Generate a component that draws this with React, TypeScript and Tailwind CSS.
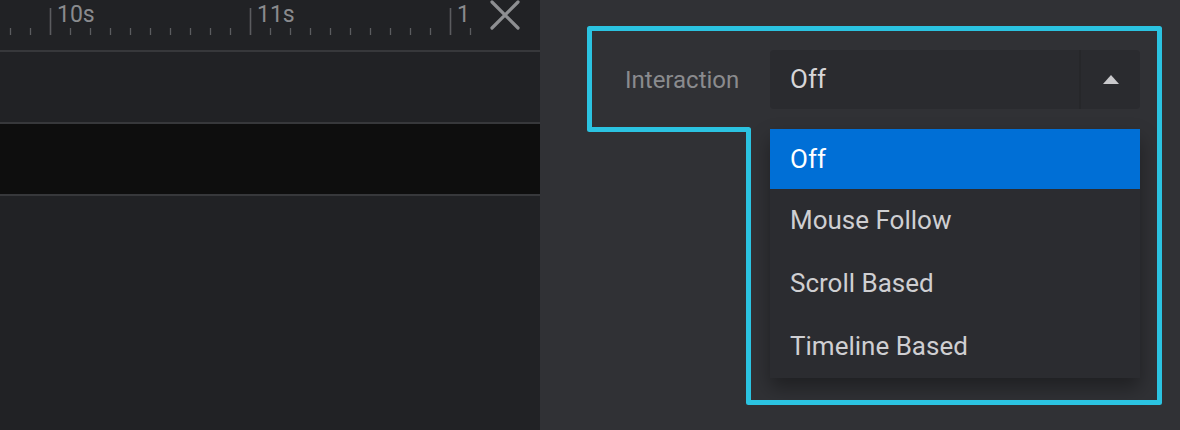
import React from "react";

const font = { fontFamily: "Roboto, 'Liberation Sans', sans-serif" };

const options = ["Off", "Mouse Follow", "Scroll Based", "Timeline Based"];

function Ruler() {
  const ticks: { x: number; major: boolean }[] = [];
  for (let x = 10; x <= 470; x += 20) {
    ticks.push({ x, major: (x - 50) % 200 === 0 });
  }
  return (
    <div className="relative h-[50px] overflow-hidden">
      <svg className="absolute left-0 top-0" width="472" height="50">
        {ticks.map((t) => (
          <line
            key={t.x}
            x1={t.x + 0.5}
            x2={t.x + 0.5}
            y1={t.major ? 8 : 28}
            y2={35}
            stroke="#5b5c5f"
            strokeWidth={t.major ? 1.6 : 1.3}
          />
        ))}
      </svg>
      <div className="absolute left-0 top-0 h-[50px] w-[471px] overflow-hidden leading-none">
        <span className="absolute left-[57px] top-[3px] text-[23px] text-[#8a8b8e]">10s</span>
        <span className="absolute left-[257px] top-[3px] text-[23px] text-[#8a8b8e]">11s</span>
        <span className="absolute left-[457px] top-[3px] text-[23px] text-[#8a8b8e]">1</span>
      </div>
      <svg className="absolute left-[489px] top-[0px]" width="32" height="30" viewBox="0 0 32 30">
        <path d="M3 2 L29 28 M29 2 L3 28" stroke="#8e8f92" strokeWidth="3.2" strokeLinecap="round" />
      </svg>
    </div>
  );
}

export default function App() {
  return (
    <div className="relative flex h-[430px] w-[1180px] overflow-hidden bg-[#303135]" style={font}>
      <div className="flex w-[540px] flex-col bg-[#212225]">
        <Ruler />
        <div className="h-[2px] bg-[#37383b]" />
        <div className="h-[70px]" />
        <div className="h-[2px] bg-[#37383b]" />
        <div className="h-[70px] bg-[#0e0e0e]" />
        <div className="h-[2px] bg-[#37383b]" />
        <div className="flex-1" />
      </div>

      <div className="flex-1 pl-[85px] pt-[50px]">
        <div className="flex items-start">
          <div className="flex h-[59px] w-[145px] items-center text-[24px] text-[#8a8b8e]">Interaction</div>
          <div className="relative w-[370px]">
            <div className="flex h-[59px] items-stretch rounded-[4px] bg-[#2a2b2f]">
              <div className="flex flex-1 items-center pl-[20px] text-[26px] text-[#d6d6d8]">Off</div>
              <div className="w-[2px] bg-[#26272a]" />
              <div className="flex w-[59px] items-center justify-center">
                <svg width="16" height="9" viewBox="0 0 16 9">
                  <path d="M0 9 L8 0 L16 9 Z" fill="#c9c9cc" />
                </svg>
              </div>
            </div>
            <div className="absolute left-0 top-[79px] w-full bg-[#2b2c30] shadow-[0_10px_18px_rgba(0,0,0,0.35)]">
              {options.map((o, i) => (
                <div
                  key={o}
                  className={
                    i === 0
                      ? "flex h-[60px] items-center bg-[#006fd6] pl-[20px] text-[26px] text-white"
                      : "flex h-[63px] items-center pl-[20px] text-[26px] text-[#cfcfd2]"
                  }
                >
                  {o}
                </div>
              ))}
            </div>
          </div>
        </div>
      </div>

      <svg className="pointer-events-none absolute left-0 top-0" width="1180" height="430">
        <path
          d="M589.5 28.5 L1159.5 28.5 L1159.5 402.5 L748.5 402.5 L748.5 129.5 L589.5 129.5 Z"
          fill="none"
          stroke="#2bc3e1"
          strokeWidth="5"
          strokeLinejoin="round"
        />
      </svg>
    </div>
  );
}
